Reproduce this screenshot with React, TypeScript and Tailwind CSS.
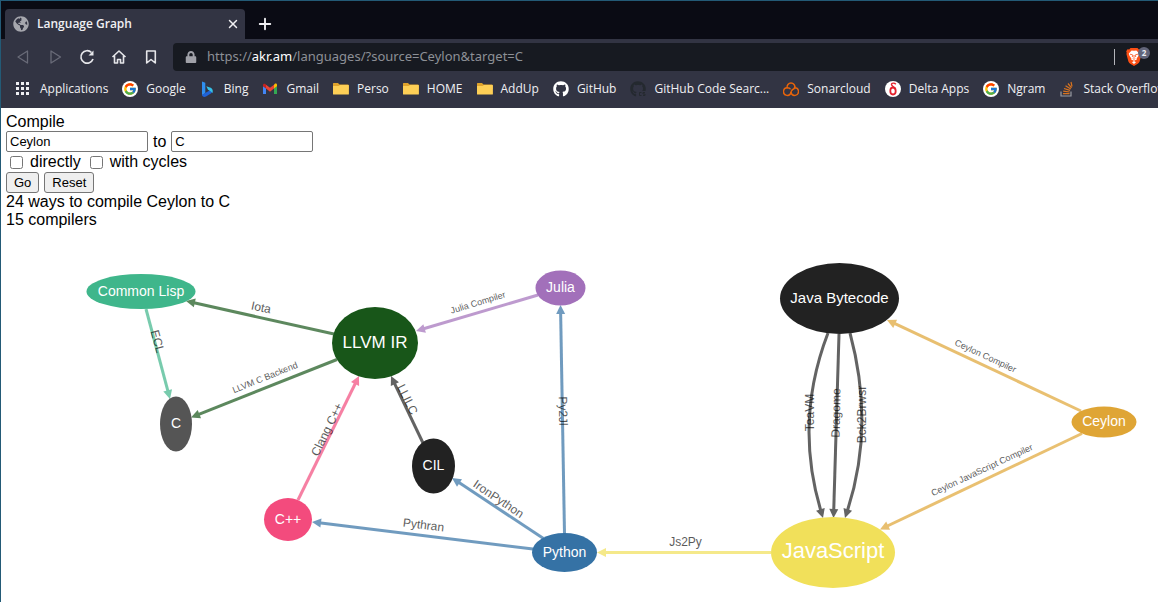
import type { ReactNode } from "react";
import { FcGoogle } from "react-icons/fc";
import { FaGithub, FaGlobeAmericas, FaLock } from "react-icons/fa";
import { X, Plus } from "lucide-react";

const icon = "block size-4 shrink-0";

const AppsIcon = () => (
  <svg viewBox="0 0 16 16" className={icon} fill="#eeeef2">
    {[1, 6, 11].flatMap((y) => [1, 6, 11].map((x) => <rect key={`${x}-${y}`} x={x - 1} y={y} width="3" height="3" />))}
  </svg>
);

const GoogleIcon = () => (
  <span className="flex size-4 shrink-0 items-center justify-center rounded-full bg-white">
    <FcGoogle className="size-3.5" />
  </span>
);

const BingIcon = () => (
  <svg viewBox="0 0 16 16" className={icon}>
    <path d="M2 .5l3.300 1.200v10.500L2 14z" fill="#2f8ff0" />
    <path d="M2 14l3.200-1.900L10 9.200l2 2.600-6 3.700c-2 1-4-.1-4-1.500z" fill="#1f62d8" />
    <path d="M6.300 5.200l1.700 3.600 1.800 1L12.500 12c1-3-.4-4.700-2.500-5.500z" fill="#35c1e8" />
  </svg>
);

const GmailIcon = () => (
  <svg viewBox="0 0 16 16" className={icon}>
    <path d="M1 4.200V13h3V7.300L1 5z" fill="#4285f4" />
    <path d="M15 4.200V13h-3V7.300L15 5z" fill="#34a853" />
    <path d="M12 3.800V7.600l3-2.300V4c0-1.300-1.500-1.800-2.400-1z" fill="#fbbc04" />
    <path d="M4 3.700L8 6.800l4-3.100v3.900l-4 3.100-4-3.100z" fill="#ea4335" />
    <path d="M1 4v1.300l3 2.300V3.700L3.400 3C2.400 2.200 1 2.800 1 4z" fill="#c5221f" />
  </svg>
);

const FolderIcon = () => (
  <svg viewBox="0 0 16 16" className={icon}>
    <path d="M0 2.500Q0 2 .6 2H5l1.500 1.500H15q.6 0 .6.600V8H0z" fill="#dfa32c" />
    <path d="M0 5h5.500L7 4h8.400q.5 0 .5.500V13q0 .6-.6.600H.6Q0 13.600 0 13z" fill="#fdcf56" />
  </svg>
);

const GithubIcon = () => <FaGithub className="size-4 shrink-0 text-white" />;

const GithubSearchIcon = () => (
  <span className="relative size-4 shrink-0">
    <FaGithub className="size-4 text-[#24292f]" />
    <svg viewBox="0 0 8 6" className="absolute right-0 bottom-0 h-1.5 w-2">
      <rect width="8" height="6" fill="#323443" />
      <path d="M3.500 1.500H1.500v3h2M7 1.500H5v1.500h2v1.500H5" fill="none" stroke="#24292f" />
    </svg>
  </span>
);

const SonarIcon = () => (
  <svg viewBox="0 0 16 16" className={icon} fill="none" stroke="#e8640a" strokeWidth="1.400" strokeLinecap="round">
    <path d="M4.200 6.800A3.900 3.900 0 1 1 11.800 6.800" />
    <path d="M8 11.500A3.800 3.800 0 1 1 4.600 6.800c1 0 1.800.4 2.500 1" />
    <path d="M11.800 5.500c0 1.700-1 2.700-2.400 3.200M8 11.500a3.800 3.800 0 1 0 3.800-4.700" />
    <path d="M8 11.500c0-1 .4-2 1.400-2.800" />
  </svg>
);

const DeltaIcon = () => (
  <svg viewBox="0 0 16 16" className={icon}>
    <circle cx="8" cy="8" r="8" fill="#fff" />
    <ellipse cx="8" cy="10" rx="2.700" ry="3.500" fill="none" stroke="#e3222e" strokeWidth="1.800" />
    <path d="M10.800 3.300C9.500 1.600 6.300 1.800 6.500 3.600c.2 1.500 3 2.200 3.800 4.600" fill="none" stroke="#e3222e" strokeWidth="1.400" />
  </svg>
);

const StackIcon = () => (
  <svg viewBox="0 0 16 16" className={icon} fill="none" strokeWidth="1.200">
    <path d="M2 10.500v4.500h10v-4.500" stroke="#9a9ca3" />
    <path d="M4 12.700h6.500M4.200 10.200l6.400.8M5 7.500l6 1.900M6.500 4.800l5.300 3.300M9 2.500l3.500 4.300M12 1l1 4.500" stroke="#d9731f" />
  </svg>
);

const BraveIcon = () => (
  <svg viewBox="0 0 16 18" className="block h-[18px] w-4">
    <path d="M4.500 0h7l1.300 1.400 1.700-.2 1.300 2-.5 1.500.3 1.300-2 7.400c-.3 1-1 1.700-1.800 2.300L8 18l-3.800-2.300c-.8-.6-1.500-1.300-1.800-2.300L.4 6l.3-1.300L.2 3.200l1.300-2 1.700.2z" fill="#fb4f14" />
    <path d="M8 2.800l2.400-.4 2.800 3.200-.8 2.500-1.800 2.400.3 1-2.900 1.300-2.900-1.300.3-1-1.800-2.400-.8-2.500 2.800-3.200zM8 13l2 1.200L8 16l-2-1.800z" fill="#fff" />
    <path d="M4 6.200l2.500.6.3 1.200-.8 1M12 6.200l-2.500.6-.3 1.200.8 1M8 7v3M6.700 10.500L8 11.300l1.300-.8" fill="none" stroke="#fb4f14" strokeWidth=".8" />
  </svg>
);

const bookmarks: { label: string; icon: ReactNode }[] = [
  { label: "Applications", icon: <AppsIcon /> },
  { label: "Google", icon: <GoogleIcon /> },
  { label: "Bing", icon: <BingIcon /> },
  { label: "Gmail", icon: <GmailIcon /> },
  { label: "Perso", icon: <FolderIcon /> },
  { label: "HOME", icon: <FolderIcon /> },
  { label: "AddUp", icon: <FolderIcon /> },
  { label: "GitHub", icon: <GithubIcon /> },
  { label: "GitHub Code Searc...", icon: <GithubSearchIcon /> },
  { label: "Sonarcloud", icon: <SonarIcon /> },
  { label: "Delta Apps", icon: <DeltaIcon /> },
  { label: "Ngram", icon: <GoogleIcon /> },
  { label: "Stack Overflow", icon: <StackIcon /> },
];

const NavButton = ({ label, dim, children }: { label: string; dim?: boolean; children: ReactNode }) => (
  <button type="button" aria-label={label} className={dim ? "text-[#696b78]" : "text-[#e6e6ea]"}>
    <svg viewBox="0 0 16 16" className="block size-4" fill="none" stroke="currentColor" strokeWidth="1.300" strokeLinejoin="round">
      {children}
    </svg>
  </button>
);

function Browser() {
  return (
    <header className="bg-[#323443] font-['Open_Sans','Noto_Sans',sans-serif] text-xs text-[#f0f0f3]">
      <div className="flex h-[38px] items-end bg-[#0a0b14] pl-1">
        <div className="flex h-[30px] w-60 items-center gap-2 rounded-t bg-[#323443] pr-[5px] pl-2">
          <FaGlobeAmericas className="size-4 text-[#a6a7ae]" />
          <span className="flex-1 font-semibold">Language Graph</span>
          <button type="button" aria-label="Close tab">
            <X className="size-3.5" strokeWidth={2.5} />
          </button>
        </div>
        <button type="button" aria-label="New tab" className="flex h-[30px] w-10 items-center justify-center">
          <Plus className="size-[18px]" strokeWidth={2.5} />
        </button>
      </div>

      <div className="flex items-center pt-1 pl-[14px]">
        <nav className="flex gap-4 pr-[14px]" aria-label="Navigation">
          <NavButton label="Back" dim><path d="M12.500 2v12L3 8z" /></NavButton>
          <NavButton label="Forward" dim><path d="M4 2v12l9.500-6z" /></NavButton>
          <NavButton label="Reload">
            <path d="M14 10A6.200 6.200 0 1 1 12.500 3.500" strokeWidth="1.700" />
            <path d="M14.500 1.500v5H9.500z" fill="currentColor" stroke="none" />
          </NavButton>
          <NavButton label="Home"><path d="M1.500 8L8 2l6.500 6M3.500 6.800V14h3v-3.500h3V14h3V6.800" strokeWidth="1.600" /></NavButton>
          <NavButton label="Bookmark"><path d="M3.700 2h8.600v12L8 10.500 3.700 14z" strokeWidth="1.600" /></NavButton>
        </nav>
        <div className="flex h-7 min-w-0 flex-1 items-center rounded-l bg-[#171a21] pl-3">
          <FaLock className="size-3 text-[#a0a1a8]" />
          <p className="flex-1 pl-2.5 font-['Noto_Sans','Open_Sans',sans-serif] text-[13px] text-[#8d9096]">
            https://<span className="text-white">akr.am</span>/languages/?source=Ceylon&amp;target=C
          </p>
          <span className="h-4 w-px bg-[#b4b5ba]" />
          <button type="button" aria-label="Brave Shields, 2 blocked" className="relative mr-2 ml-[11px] w-6">
            <BraveIcon />
            <span className="absolute -top-px right-0 flex size-3 items-center justify-center rounded-full bg-[#62657a] text-[8px] font-bold">2</span>
          </button>
        </div>
      </div>

      <nav className="flex h-[37px] gap-[14px] overflow-hidden pb-0.5 pl-[15px]" aria-label="Bookmarks">
        {bookmarks.map((b) => (
          <a key={b.label} href="#" className="flex shrink-0 items-center gap-2 whitespace-nowrap">
            {b.icon}
            {b.label}
          </a>
        ))}
      </nav>
    </header>
  );
}

const field = "h-[21px] w-[142px] rounded-xs border border-[#767676] bg-white px-[3px] text-[13px]";
const pushButton = "h-[21px] rounded-[3px] border border-[#767676] bg-[#efefef] px-[7px] text-[13px]";
const check = "mr-[7px] ml-1 size-[13px]";

function CompileForm() {
  return (
    <form className="leading-[18px]" onSubmit={(e) => e.preventDefault()}>
      <label htmlFor="source" className="block">Compile</label>
      <div className="flex h-[21px] items-center gap-[5px]">
        <input id="source" className={field} defaultValue="Ceylon" />
        <label htmlFor="target">to</label>
        <input id="target" className={field} defaultValue="C" />
      </div>
      <div className="flex h-5 items-center gap-[5px]">
        <label className="flex items-center"><input type="checkbox" className={check} />directly</label>
        <label className="flex items-center"><input type="checkbox" className={check} />with cycles</label>
      </div>
      <div className="flex gap-[5px]">
        <button type="submit" className={pushButton}>Go</button>
        <button type="reset" className={pushButton}>Reset</button>
      </div>
    </form>
  );
}

type Node = { name: string; x: number; y: number; rx: number; ry: number; fill: string; size: number };

const nodes: Node[] = [
  { name: "Common Lisp", x: 141, y: 291.5, rx: 54.5, ry: 17.5, fill: "#3fb68b", size: 14 },
  { name: "C", x: 176, y: 424, rx: 16, ry: 27.5, fill: "#555555", size: 14 },
  { name: "LLVM IR", x: 375, y: 343, rx: 43, ry: 36, fill: "#185619", size: 17 },
  { name: "Julia", x: 560.5, y: 288, rx: 25, ry: 17.5, fill: "#a270ba", size: 14 },
  { name: "CIL", x: 433.5, y: 466, rx: 21.5, ry: 27.5, fill: "#222222", size: 14 },
  { name: "C++", x: 288, y: 519.5, rx: 24, ry: 21.5, fill: "#f34b7d", size: 14 },
  { name: "Python", x: 564.5, y: 552.5, rx: 32.5, ry: 19.5, fill: "#3572a5", size: 14 },
  { name: "Java Bytecode", x: 839.5, y: 298.5, rx: 59.5, ry: 35.5, fill: "#222222", size: 15 },
  { name: "JavaScript", x: 833, y: 552.5, rx: 62, ry: 35.5, fill: "#f1e05a", size: 22 },
  { name: "Ceylon", x: 1104, y: 422, rx: 32.5, ry: 15.5, fill: "#dfa535", size: 14 },
];

type Edge = {
  name: string;
  from: [number, number];
  to: [number, number];
  via?: [number, number, number, number];
  label: [number, number];
  angle: number;
  color: string;
  size: number;
};

const edges: Edge[] = [
  { name: "Iota", from: [334, 334], to: [186, 301], label: [261, 307.5], angle: 12, color: "#185619", size: 12 },
  { name: "ECL", from: [146, 309], to: [170, 399], label: [157.5, 341.5], angle: 75, color: "#3fb68b", size: 12 },
  { name: "LLVM C Backend", from: [337, 359.5], to: [191, 417.5], label: [265, 377.5], angle: -22, color: "#185619", size: 9 },
  { name: "Julia Compiler", from: [538, 295], to: [416, 331], label: [478, 302.5], angle: -17, color: "#a270ba", size: 9 },
  { name: "LLILC", from: [423, 443], to: [391, 376], label: [407.5, 399.5], angle: 64, color: "#222222", size: 12 },
  { name: "Clang C++", from: [298, 500], to: [359, 376], label: [327, 429.5], angle: -64, color: "#f34b7d", size: 12 },
  { name: "Py2Jl", from: [564.5, 534], to: [560.5, 305], label: [563, 411], angle: 89, color: "#3572a5", size: 12 },
  { name: "IronPython", from: [543.5, 538.5], to: [452, 478], label: [498.5, 499], angle: 34, color: "#3572a5", size: 12 },
  { name: "Pythran", from: [533, 549], to: [312, 522], label: [423.5, 525], angle: 7, color: "#3572a5", size: 12 },
  { name: "Js2Py", from: [771, 552.5], to: [597, 552.5], label: [685.5, 542], angle: 0, color: "#f1e05a", size: 12 },
  { name: "TeaVM", from: [828, 333], via: [808, 385, 801, 445], to: [823, 518], label: [809.5, 412.5], angle: -90, color: "#222222", size: 12 },
  { name: "Dragome", from: [839, 334], to: [833.5, 518], label: [836, 413], angle: -89, color: "#222222", size: 12 },
  { name: "Bck2Brwsr", from: [850, 333], via: [864, 385, 869, 445], to: [845, 518], label: [862, 414.5], angle: -90, color: "#222222", size: 12 },
  { name: "Ceylon Compiler", from: [1081, 411], to: [887, 320], label: [985.5, 356], angle: 25, color: "#dfa535", size: 9 },
  { name: "Ceylon JavaScript Compiler", from: [1082, 433.5], to: [880, 529.5], label: [982, 470], angle: -25, color: "#dfa535", size: 9 },
];

function EdgeLine({ edge }: { edge: Edge }) {
  const [x1, y1] = edge.from;
  const [x2, y2] = edge.to;
  const [cx, cy] = edge.via ? [edge.via[2], edge.via[3]] : [x1, y1];
  const a = Math.atan2(y2 - cy, x2 - cx);
  const ex = x2 - 7 * Math.cos(a);
  const ey = y2 - 7 * Math.sin(a);
  const d = edge.via ? `M${x1} ${y1}C${edge.via.join(" ")} ${ex} ${ey}` : `M${x1} ${y1}L${ex} ${ey}`;
  return (
    <g opacity="0.7">
      <path d={d} fill="none" stroke={edge.color} strokeWidth="3" />
      <path d="M0 0L-9 -4.500V4.500z" fill={edge.color} transform={`translate(${x2} ${y2}) rotate(${(a * 180) / Math.PI})`} />
    </g>
  );
}

function Graph() {
  return (
    <svg viewBox="6 229 1152 373" className="block w-full" role="img" aria-label="Compiler graph">
      {edges.map((e) => <EdgeLine key={e.name} edge={e} />)}
      {nodes.map((n) => (
        <g key={n.name}>
          <ellipse cx={n.x} cy={n.y} rx={n.rx} ry={n.ry} fill={n.fill} />
          <text x={n.x} y={n.y} dy={n.size > 15 ? 5 : 4} textAnchor="middle" fontSize={n.size} fill="#fff">{n.name}</text>
        </g>
      ))}
      {edges.map((e) => (
        <text
          key={e.name}
          dy={e.size > 10 ? 4 : 3}
          textAnchor="middle"
          fontSize={e.size}
          fill="#000"
          opacity="0.65"
          transform={`translate(${e.label[0]} ${e.label[1]}) rotate(${e.angle})`}
        >
          {e.name}
        </text>
      ))}
    </svg>
  );
}

export default function App() {
  return (
    <div className="min-h-screen overflow-hidden border-t border-l border-[#235a76] bg-white">
      <Browser />
      <main className="pt-[5px] pl-[5px] font-['Liberation_Sans',Arial,sans-serif] text-base leading-[18px] text-black">
        <CompileForm />
        <p>24 ways to compile Ceylon to C</p>
        <p>15 compilers</p>
        <Graph />
      </main>
    </div>
  );
}
